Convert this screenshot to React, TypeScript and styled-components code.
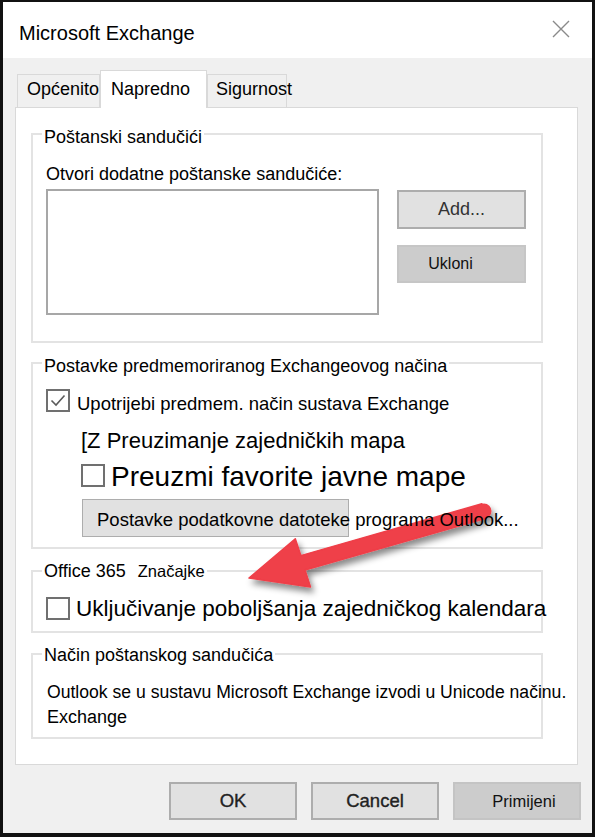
import React from 'react'
import styled, { createGlobalStyle } from 'styled-components'

const GlobalStyle = createGlobalStyle`
  html, body {
    margin: 0;
    padding: 0;
    background: #ffffff;
  }
  body {
    font-family: "Liberation Sans", Arial, sans-serif;
    color: #000;
  }
  * {
    box-sizing: border-box;
  }
`

const Frame = styled.div`
  position: relative;
  width: 595px;
  height: 837px;
  border-style: solid;
  border-color: #111;
  border-width: 2px 3px 4px 3px;
  background: #f0f0f0;
  display: flex;
  flex-direction: column;
  overflow: hidden;
`

const TitleBar = styled.div`
  height: 56px;
  flex: none;
  background: #ffffff;
  display: flex;
  justify-content: space-between;
  align-items: flex-start;
  padding: 19px 22px 0 16px;
`

const Title = styled.div`
  font-size: 20px;
  line-height: 24px;
`

const CloseButton = styled.div`
  width: 18px;
  height: 18px;
  margin-top: -1px;
  display: flex;
`

const TabStrip = styled.div`
  display: flex;
  align-items: flex-end;
  margin: 12px 0 -1px 14px;
  position: relative;
  z-index: 2;
`

const Tab = styled.div<{ $active?: boolean; $width: number; $pad: number }>`
  width: ${p => p.$width}px;
  height: ${p => (p.$active ? 38 : 34)}px;
  padding: ${p => (p.$active ? 8 : 4)}px 0 0 ${p => p.$pad}px;
  border: 1px solid #d9d9d9;
  border-bottom: ${p => (p.$active ? 'none' : '1px solid #d9d9d9')};
  background: ${p => (p.$active ? '#ffffff' : '#f0f0f0')};
  font-size: 18px;
  line-height: 20px;
  white-space: nowrap;
`

const Panel = styled.div`
  margin-left: 12px;
  width: 563px;
  height: 658px;
  flex: none;
  background: #ffffff;
  border: 1px solid #d9d9d9;
  padding: 13px 0 0 15px;
  display: flex;
  flex-direction: column;
`

const Group = styled.fieldset<{ $mt: number; $pb: number }>`
  width: 512px;
  margin: ${p => p.$mt}px 0 0 0;
  padding: 0 13px ${p => p.$pb}px 13px;
  border: 2px solid #e3e3e3;
  min-width: 0;
`

const Legend = styled.legend<{ $lift: number }>`
  margin-left: -4px;
  padding: ${p => p.$lift}px 2px 0 2px;
  font-size: 18px;
  line-height: 20px;
  white-space: nowrap;
`

const LegendTag = styled.span`
  margin-left: 12px;
  font-size: 16.5px;
  background: #ffffff;
`

const Label = styled.div<{ $mt: number }>`
  margin-top: ${p => p.$mt}px;
  font-size: 18px;
  line-height: 22px;
  white-space: nowrap;
`

const MailboxRow = styled.div`
  display: flex;
  gap: 18px;
  margin-top: 4px;
`

const ListBox = styled.div`
  width: 333px;
  height: 126px;
  border: 2px solid #a7a7a7;
  background: #ffffff;
`

const ButtonColumn = styled.div`
  display: flex;
  flex-direction: column;
  gap: 16px;
  padding-top: 1px;
`

const Button = styled.div<{ $muted?: boolean; $w: number; $h: number; $fs: number; $shift?: number }>`
  width: ${p => p.$w}px;
  height: ${p => p.$h}px;
  display: flex;
  align-items: center;
  justify-content: center;
  padding-left: ${p => (p.$shift && p.$shift > 0 ? p.$shift * 2 : 0)}px;
  padding-right: ${p => (p.$shift && p.$shift < 0 ? -p.$shift * 2 : 0)}px;
  background: ${p => (p.$muted ? '#cccccc' : '#e1e1e1')};
  border: 2px solid ${p => (p.$muted ? '#c6c6c6' : '#adadad')};
  color: ${p => (p.$muted ? '#111' : '#333')};
  font-size: ${p => p.$fs}px;
  white-space: nowrap;
`

const CheckRow = styled.div<{ $mt: number; $indent?: number; $gap: number }>`
  display: flex;
  align-items: flex-start;
  gap: ${p => p.$gap}px;
  margin-top: ${p => p.$mt}px;
  margin-left: ${p => p.$indent || 0}px;
  white-space: nowrap;
`

const Box = styled.div<{ $mt?: number }>`
  width: 24px;
  height: 23px;
  flex: none;
  margin-top: ${p => p.$mt || 0}px;
  border: 2px solid #707070;
  background: #ffffff;
  display: flex;
  align-items: center;
  justify-content: center;
`

const RowText = styled.span<{ $fs: number; $lh: number; $mt?: number }>`
  font-size: ${p => p.$fs}px;
  line-height: ${p => p.$lh}px;
  margin-top: ${p => p.$mt || 0}px;
`

const DataFileButton = styled.div`
  width: 267px;
  height: 38px;
  margin: 7px 0 0 36px;
  padding: 3px 0 0 14px;
  background: #e1e1e1;
  border: 1px solid #adadad;
  font-size: 18.5px;
  line-height: 34px;
  white-space: nowrap;
  overflow: visible;
`

/* the caption runs past the button and sits above the annotation arrow */
const DataFileCaption = styled.span`
  position: relative;
  z-index: 6;
`

const Paragraph = styled.div`
  margin-top: 15px;
  margin-left: 1px;
  font-size: 18px;
  line-height: 25px;
  white-space: nowrap;
`

const FirstLine = styled.span`
  font-size: 17.6px;
`

const Footer = styled.div`
  display: flex;
  justify-content: flex-end;
  gap: 14px;
  margin-top: 17px;
  padding-right: 11px;
`

const FooterButton = styled.div<{ $muted?: boolean }>`
  width: 128px;
  height: 38px;
  display: flex;
  align-items: center;
  justify-content: center;
  padding-left: ${p => (p.$muted ? 14 : 0)}px;
  background: ${p => (p.$muted ? '#cccccc' : '#e1e1e1')};
  border: 2px solid ${p => (p.$muted ? '#c4c4c4' : '#adadad')};
  color: ${p => (p.$muted ? '#111' : '#222')};
  font-size: ${p => (p.$muted ? 16.5 : 18.5)}px;
  -webkit-text-stroke: ${p => (p.$muted ? 0 : 0.35)}px #222;
`

const ArrowLayer = styled.svg`
  position: absolute;
  top: -2px;
  left: -3px;
  width: 595px;
  height: 837px;
  pointer-events: none;
  z-index: 5;
`

const Check = ({ checked }: { checked?: boolean }) => (
  <svg width="18" height="17" viewBox="0 0 18 17">
    {checked && (
      <polyline points="2.5,8.5 7,13 15.5,3.5" fill="none" stroke="#5b5b5b" strokeWidth="1.6" />
    )}
  </svg>
)

const Arrow = () => (
  <ArrowLayer viewBox="0 0 595 837">
    <defs>
      <filter id="arrowShadow" x="-20%" y="-50%" width="140%" height="200%">
        <feDropShadow dx="3" dy="5" stdDeviation="3" floodColor="#000" floodOpacity="0.45" />
      </filter>
    </defs>
    <g filter="url(#arrowShadow)">
      <polygon
        points="481.9,503.8 300.8,555.6 295.3,538.7 249,578 310.5,586.9 305,570 486.1,518.2"
        fill="#ef3f48"
        stroke="#ef3f48"
        strokeWidth="1.5"
        strokeLinejoin="round"
      />
      <circle cx="484" cy="511" r="7.5" fill="#ef3f48" />
    </g>
  </ArrowLayer>
)

export default function App() {
  return (
    <>
      <GlobalStyle />
      <Frame>
        <TitleBar>
          <Title>Microsoft Exchange</Title>
          <CloseButton>
            <svg width="18" height="18" viewBox="0 0 18 18">
              <path d="M1 1 L17 17 M17 1 L1 17" stroke="#8a8a8a" strokeWidth="1.4" fill="none" />
            </svg>
          </CloseButton>
        </TitleBar>

        <TabStrip>
          <Tab $width={83} $pad={9}>Općenito</Tab>
          <Tab $active $width={107} $pad={10}>Napredno</Tab>
          <Tab $width={80} $pad={8}>Sigurnost</Tab>
        </TabStrip>

        <Panel>
          <Group $mt={0} $pb={26}>
            <Legend $lift={6}>Poštanski sandučići</Legend>
            <Label $mt={16}>Otvori dodatne poštanske sandučiće:</Label>
            <MailboxRow>
              <ListBox />
              <ButtonColumn>
                <Button $w={129} $h={39} $fs={18}>Add...</Button>
                <Button $muted $w={129} $h={38} $fs={16} $shift={-11}>Ukloni</Button>
              </ButtonColumn>
            </MailboxRow>
          </Group>

          <Group $mt={7} $pb={10}>
            <Legend $lift={6}>Postavke predmemoriranog Exchangeovog načina</Legend>
            <CheckRow $mt={13} $gap={7}>
              <Box>
                <Check checked />
              </Box>
              <RowText $fs={18.5} $lh={24} $mt={3}>Upotrijebi predmem. način sustava Exchange</RowText>
            </CheckRow>
            <CheckRow $mt={12} $indent={35} $gap={0}>
              <RowText $fs={22} $lh={26}>[Z Preuzimanje zajedničkih mapa</RowText>
            </CheckRow>
            <CheckRow $mt={8} $indent={35} $gap={6}>
              <Box $mt={2}>
                <Check />
              </Box>
              <RowText $fs={28} $lh={30}>Preuzmi favorite javne mape</RowText>
            </CheckRow>
            <DataFileButton>
              <DataFileCaption>Postavke podatkovne datoteke programa Outlook...</DataFileCaption>
            </DataFileButton>
          </Group>

          <Group $mt={12} $pb={10}>
            <Legend $lift={0}>
              Office 365
              <LegendTag>Značajke</LegendTag>
            </Legend>
            <CheckRow $mt={16} $gap={6}>
              <Box>
                <Check />
              </Box>
              <RowText $fs={22.5} $lh={24}>Uključivanje poboljšanja zajedničkog kalendara</RowText>
            </CheckRow>
          </Group>

          <Group $mt={9} $pb={7}>
            <Legend $lift={3}>Način poštanskog sandučića</Legend>
            <Paragraph>
              <FirstLine>Outlook se u sustavu Microsoft Exchange izvodi u Unicode načinu.</FirstLine>
              <br />
              Exchange
            </Paragraph>
          </Group>
        </Panel>

        <Footer>
          <FooterButton>OK</FooterButton>
          <FooterButton>Cancel</FooterButton>
          <FooterButton $muted>Primijeni</FooterButton>
        </Footer>

        <Arrow />
      </Frame>
    </>
  )
}
